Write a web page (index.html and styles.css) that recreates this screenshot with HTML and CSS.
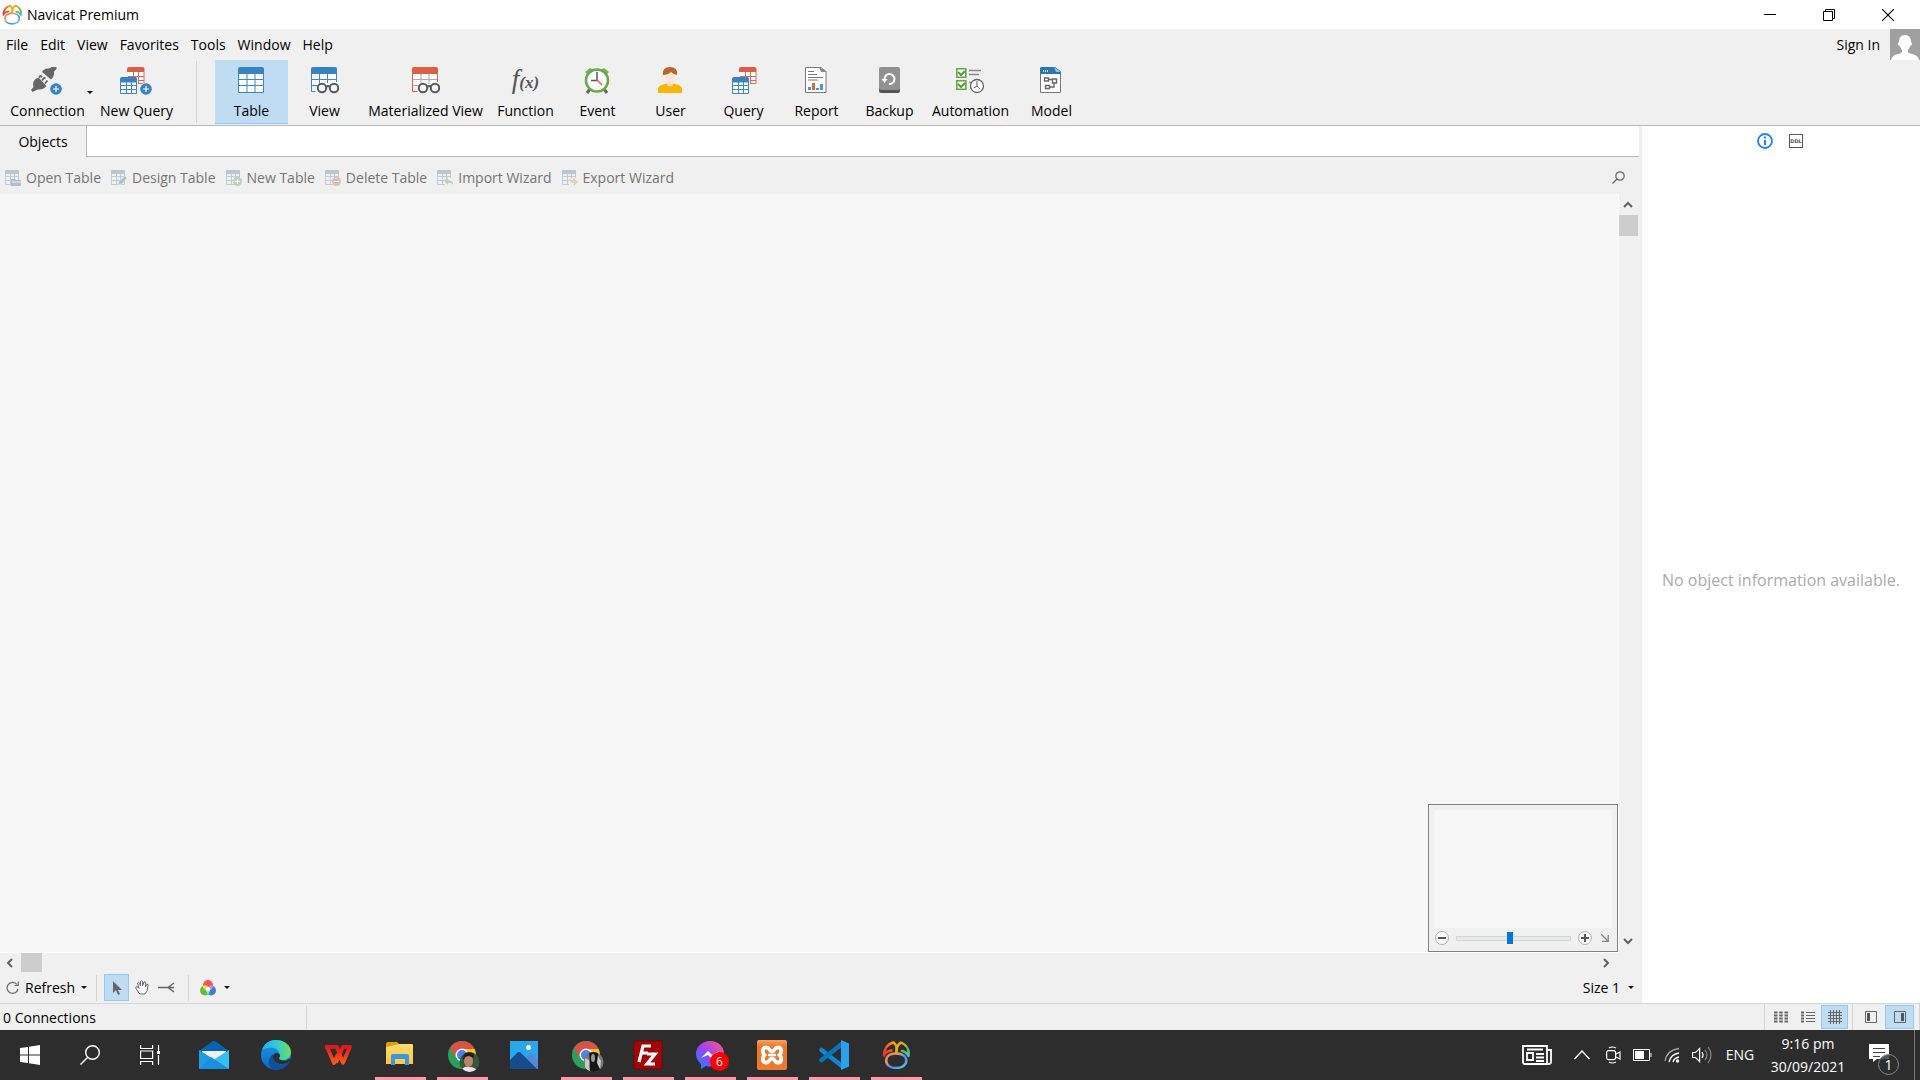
FILE: index.html
```html
<!DOCTYPE html>
<html lang="en">
<head>
<meta charset="utf-8">
<title>Navicat Premium</title>
<link rel="stylesheet" href="styles.css">
</head>
<body>
<svg class="defs" aria-hidden="true">
  <defs>
    <linearGradient id="g-warm" x1="0" y1="1" x2="1" y2="0"><stop offset="0" stop-color="#e8323c"/><stop offset=".35" stop-color="#ee4a2c"/><stop offset="1" stop-color="#ffb000"/></linearGradient>
    <linearGradient id="g-green" x1="0" y1="0" x2="1" y2="1"><stop offset="0" stop-color="#ffb000"/><stop offset=".35" stop-color="#d8b020"/><stop offset=".6" stop-color="#5fb85a"/><stop offset="1" stop-color="#46c8b4"/></linearGradient>
    <linearGradient id="g-body" x1="0" y1="0" x2="1" y2="1"><stop offset="0" stop-color="#ee6a2c"/><stop offset=".3" stop-color="#e9a070"/><stop offset=".6" stop-color="#4a86f0"/><stop offset="1" stop-color="#55d4dc"/></linearGradient>
    <linearGradient id="g-edge" x1="0" y1="0" x2="1" y2="0"><stop offset="0" stop-color="#2bb0ee"/><stop offset=".5" stop-color="#33c8d8"/><stop offset="1" stop-color="#6be05a"/></linearGradient>
    <linearGradient id="g-edge2" x1="0" y1="0" x2="0" y2="1"><stop offset="0" stop-color="#1b9de2"/><stop offset="1" stop-color="#0a66c4"/></linearGradient>
    <linearGradient id="g-wps" x1="0" y1="0" x2="0" y2="1"><stop offset="0" stop-color="#e0181c"/><stop offset="1" stop-color="#ff5a14"/></linearGradient>
    <linearGradient id="g-msg" x1="0" y1="1" x2="1" y2="0"><stop offset="0" stop-color="#0a8cff"/><stop offset=".5" stop-color="#a040f8"/><stop offset="1" stop-color="#ff6070"/></linearGradient>
    <linearGradient id="g-xampp" x1="0" y1="0" x2="0" y2="1"><stop offset="0" stop-color="#f7a468"/><stop offset=".2" stop-color="#ee7624"/><stop offset="1" stop-color="#ee7a30"/></linearGradient>
    <linearGradient id="g-folder" x1="0" y1="0" x2="0" y2="1"><stop offset="0" stop-color="#ffdc70"/><stop offset="1" stop-color="#fbc646"/></linearGradient>
    <linearGradient id="g-photo" x1="0" y1="0" x2="1" y2="1"><stop offset="0" stop-color="#28a8ea"/><stop offset="1" stop-color="#2ea6f0"/></linearGradient>

    <symbol id="navicat" viewBox="0 0 28 28">
      <g fill="none" stroke-width="2.400" stroke-linecap="round" stroke-linejoin="round">
        <path d="M2 14.500C1.500 9 5 3 11.500 1.500C14.500 4 15.500 7.500 14 11.500M2 14.500C2.800 11.500 6 10 9.500 9.500" stroke="url(#g-warm)"/>
        <path d="M14.500 11.500C14 7 16 3.500 19 1.500C24.500 4 27.500 9 26.500 15C25 12 23 10.500 20 10" stroke="url(#g-green)"/>
        <path d="M14.500 12.500C7.500 12 4.200 15.500 4.200 19.500C4.200 24.500 9 27 14 27C20 27 24.300 24 24.300 19.500C24.300 15.500 20.500 12.500 14.500 12.500" stroke="url(#g-body)"/>
      </g>
    </symbol>
    <symbol id="grid-blue" viewBox="0 0 26 26">
      <path d="M1 5h24v20H1z" fill="#fdfdfe"/><path d="M.5 6V25.500H25.500V6M9 6v19M17 6v19M1 12.500h24M1 18.500h24" fill="none" stroke="#3d87c3"/><path d="M0 7V2q0-2 2-2h22q2 0 2 2v5z" fill="#3782c2"/>
    </symbol>
    <symbol id="table" viewBox="0 0 30 28"><use href="#grid-blue" x="2" width="26" height="26"/></symbol>
    <symbol id="view" viewBox="0 0 30 28">
      <path d="M3 6h24v13H3z" fill="#fdfdfe"/><path d="M2.500 6V24.500h4M10.500 6v12M18.500 6v10M27.500 6v9M3 12.500h24M3 18.500h8" fill="none" stroke="#3d87c3"/><path d="M2 7V2q0-2 2-2h22q2 0 2 2v5z" fill="#3782c2"/>
      <g fill="#f7f7f7" stroke="#5a5a5a" stroke-width="2"><circle cx="13" cy="21" r="4.200"/><circle cx="25" cy="21" r="4.200"/><path d="M17 20q2-2 4 0" fill="none"/></g>
    </symbol>
    <symbol id="matview" viewBox="0 0 30 28">
      <path d="M3 6h24v12H3z" fill="#fafafa"/><path d="M11 6v12M19 6v11M3 12.500h24M3 18.500h7" fill="none" stroke="#aaa"/><path d="M2.500 6v18.500h5M27.500 6v9" fill="none" stroke="#d96044"/><path d="M2 7V2q0-2 2-2h22q2 0 2 2v5z" fill="#d96044"/>
      <g fill="#f7f7f7" stroke="#5a5a5a" stroke-width="2"><circle cx="13" cy="21" r="4.200"/><circle cx="25" cy="21" r="4.200"/><path d="M17 20q2-2 4 0" fill="none"/></g>
    </symbol>
    <symbol id="twogrid" viewBox="0 0 26 28">
      <path d="M8 5h16v12H8z" fill="#fff"/><path d="M24 5v11.500H8M13.500 5v6M18.500 5v12M8 9.500h16M17 13.500h7" fill="none" stroke="#e06a50"/><path d="M7 5V2q0-2 2-2h13.500q2 0 2 2v3z" fill="#d96044"/>
      <path d="M0 10h18v18H0z" fill="#f0f0f0"/><path d="M.5 15h16v11.500H.500zM6.500 15v12M11.500 15v12M1 18.500h16M1 22.500h16" fill="#fff" stroke="#3d87c3"/><path d="M0 15v-3q0-2 2-2h13q2 0 2 2v3z" fill="#3782c2"/>
    </symbol>
    <symbol id="plus" viewBox="0 0 12 12"><circle cx="6" cy="6" r="5.800" fill="#3a83c0"/><path d="M6 3v6M3 6h6" stroke="#fff" stroke-width="1.200"/></symbol>
    <symbol id="connection" viewBox="0 0 32 28">
      <path d="M0 23l2.500-3q-1.500-5 2-8l3-1.500L15.500 19q-3 4-9 3.500L1.500 25zM11 5q2-4 7-3.500l3-1.500h4.500v2L23 4.500q.5 5-3 8z" fill="#666"/><path d="M8 10.500l2-2M11 13.500l2.500-3M14 16.500l2.500-3M10 9l1 1M13 10.500l1.500 1" stroke="#666" stroke-width="1.800"/>
      <circle cx="24.500" cy="22" r="6.500" fill="#f0f0f0"/><use href="#plus" x="19" y="16" width="12" height="12"/>
    </symbol>
    <symbol id="newquery" viewBox="0 0 32 28"><use href="#twogrid" width="26" height="28"/><circle cx="26" cy="22" r="6.500" fill="#f0f0f0"/><use href="#plus" x="20" y="16" width="12" height="12"/></symbol>
    <symbol id="event" viewBox="0 0 30 28">
      <path d="M3 5l5-4 4 2-6 5zM27 5l-5-4-4 2 6 5z" fill="#77b455"/><path d="M8 22l-3 4M22 22l3 4" stroke="#666" stroke-width="3"/><circle cx="15" cy="13.500" r="11" fill="#fff" stroke="#67aa45" stroke-width="2.500"/><path d="M15 5v9M9 13.500h6" stroke="#555" stroke-width="1.500"/><path d="M15 13l5 5" stroke="#e25a48" stroke-width="1.400"/>
    </symbol>
    <symbol id="user" viewBox="0 0 30 28"><path d="M3 26v-5q1-3 7-4l5-1 5 1q6 1 7 4v5z" fill="#f8b800"/><path d="M12 14h6v4q-3 3-6 0z" fill="#fad9c4"/><path d="M9 5h12q0 12-6 12T9 6" fill="#fde5d5"/><path d="M8 8Q7 0 15 0t7 8q-4-1-6-3-3 3-8 3" fill="#b5682c"/></symbol>
    <symbol id="report" viewBox="0 0 30 28"><path d="M4.500.500H20l5 4V25.500H4.500z" fill="#fff" stroke="#777"/><path d="M18 0l8 5h-6z" fill="#888"/><path d="M7 4.500h6M7 7.500h9M7 10.500h15M7 13h10" stroke="#777"/><path d="M7 20h3v3H7zM15 21h3v2h-3zM19 17h3v6h-3z" fill="#4299e2"/><path d="M11 16h3v7h-3z" fill="#e76144"/></symbol>
    <symbol id="backup" viewBox="0 0 30 28"><rect x="5" y="3" width="21" height="23" rx="2" fill="#555"/><rect x="5" y="0" width="21" height="23" rx="2" fill="#919191"/><path d="M10.500 12.500A5 5 0 1 1 15 17" fill="none" stroke="#fff" stroke-width="2"/><path d="M7.500 12h6l-3 4z" fill="#fff"/></symbol>
    <symbol id="automation" viewBox="0 0 30 28"><path d="M1.800 1.800h9v8.500h-9zM1.800 13.800h9v8.500h-9z" fill="#fff" stroke="#67a546" stroke-width="1.600"/><path d="M3 5l3 3 4-4M3 17l3 3 4-4" fill="none" stroke="#579b36" stroke-width="2"/><path d="M14 3.500h12M14 7.500h10M14 15.500h4" stroke="#888" stroke-width="1.600"/><circle cx="22" cy="19" r="6.500" fill="#fff" stroke="#666" stroke-width="1.300"/><path d="M22 14v5l-3 2" fill="none" stroke="#555"/><path d="M22 19l3 3" stroke="#e25a48"/></symbol>
    <symbol id="model" viewBox="0 0 30 28"><path d="M4.500 1h15l5 4v20.500h-20z" fill="#fff" stroke="#777"/><path d="M4 7V2q0-2 2-2h13l6 4.500V7z" fill="#2d76b0"/><path d="M18 0l7 5h-5z" fill="#85c5f1"/><path d="M7 4h1M9 4h1M11 4h1" stroke="#fff" stroke-width="1.500"/><path d="M8.500 11h4v3h-4zM16.500 12h4v4h-4zM9.500 18.500h4v3h-4zM13 12.500h3M14 20h4v-4" fill="none" stroke="#666" stroke-width="1.400"/></symbol>
    <symbol id="mini" viewBox="0 0 16 16"><path d="M.5 3v11.500h13V3M5.500 3v11M9.500 3v11M1 6.500h13M1 10.500h13" fill="none" stroke="#bdccd6"/><path d="M0 4V1q0-1 1-1h12q1 0 1 1v3z" fill="#b7c8d3"/></symbol>
    <symbol id="caret" viewBox="0 0 6 4"><path d="M0 0h6L3 3z" fill="#111"/></symbol>
    <symbol id="chrome" viewBox="0 0 32 32"><circle cx="14" cy="14" r="14" fill="#2ba158"/><path d="M2 7A14 14 0 0 1 26.500 8H14L8 17z" fill="#da5145"/><path d="M14 8h12.500A14 14 0 0 1 16 28l5-10z" fill="#fbc22d"/><circle cx="14" cy="14" r="6.500" fill="#f4f6f8"/><circle cx="14" cy="14" r="5" fill="#4a84e8"/></symbol>
  </defs>
</svg>

<header class="titlebar">
  <svg class="logo" width="20" height="21"><use href="#navicat"/></svg>
  <span class="title">Navicat Premium</span>
  <button class="winbtn" aria-label="Minimize"><svg width="12" height="12"><path d="M0 5.500h12" stroke="#000"/></svg></button>
  <button class="winbtn" aria-label="Restore"><svg width="12" height="12" fill="none" stroke="#000"><path d="M.5 2.500h9v9h-9zM2.500 2V.500h9v9H10"/></svg></button>
  <button class="winbtn" aria-label="Close"><svg width="12" height="12"><path d="M0 0l12 12M12 0L0 12" stroke="#000" stroke-width="1.200"/></svg></button>
</header>

<nav class="menubar">
  <button>File</button><button>Edit</button><button>View</button><button>Favorites</button><button>Tools</button><button>Window</button><button>Help</button>
  <a class="signin" href="#">Sign In</a>
  <svg class="avatar" width="30" height="31" viewBox="0 0 30 31"><path d="M0 0h30v31H0z" fill="#a0a0a0"/><path d="M1 31q1-5 7-6 5-1 4-4-2-2-2-4-2 0-2-3l1-1q0-7 6-7t6 7l1 1q0 3-2 3 0 2-2 4-1 3 4 4 6 1 7 6z" fill="#fff"/></svg>
</nav>

<div class="toolbar">
  <button class="tool conn"><svg width="32" height="28"><use href="#connection"/></svg>Connection</button>
  <button class="drop" aria-label="Connection types"><svg width="6" height="4"><use href="#caret"/></svg></button>
  <button class="tool newq"><svg width="32" height="28"><use href="#newquery"/></svg>New Query</button>
  <i class="divider"></i>
  <button class="tool active"><svg width="30" height="28"><use href="#table"/></svg>Table</button>
  <button class="tool"><svg width="30" height="28"><use href="#view"/></svg>View</button>
  <button class="tool wide"><svg width="30" height="28"><use href="#matview"/></svg>Materialized View</button>
  <button class="tool narrow"><span class="fx" aria-hidden="true">f<small>(x)</small></span>Function</button>
  <button class="tool"><svg width="30" height="28"><use href="#event"/></svg>Event</button>
  <button class="tool"><svg width="30" height="28"><use href="#user"/></svg>User</button>
  <button class="tool"><svg width="30" height="28"><use href="#twogrid" x="4" width="26" height="28"/></svg>Query</button>
  <button class="tool"><svg width="30" height="28"><use href="#report"/></svg>Report</button>
  <button class="tool"><svg width="30" height="28"><use href="#backup"/></svg>Backup</button>
  <button class="tool medium"><svg width="30" height="28"><use href="#automation"/></svg>Automation</button>
  <button class="tool"><svg width="30" height="28"><use href="#model"/></svg>Model</button>
</div>

<main class="workspace">
  <section class="objects">
    <div class="tabs"><button class="tab">Objects</button><div class="tabfill"></div></div>
    <div class="actions">
      <button disabled><svg width="16" height="16"><use href="#mini"/><path d="M6 9h4l1 1h5v6H6z" fill="#b0bfcb"/><path d="M7 12h9" stroke="#f0f0f0"/></svg>Open Table</button>
      <button disabled><svg width="16" height="16"><use href="#mini"/><path d="M7 15l1-4 6-5 2 2-5 6z" fill="#b0bfcb" stroke="#f0f0f0" stroke-width=".5"/></svg>Design Table</button>
      <button disabled><svg width="16" height="16"><use href="#mini"/><circle cx="11.500" cy="11.500" r="4.500" fill="#bdd2b2"/><path d="M11.500 9v5M9 11.500h5" stroke="#fff"/></svg>New Table</button>
      <button disabled><svg width="16" height="16"><use href="#mini"/><circle cx="11.500" cy="11.500" r="4.500" fill="#e2bab6"/><path d="M9 11.500h5" stroke="#fff"/></svg>Delete Table</button>
      <button disabled><svg width="16" height="16"><use href="#mini"/><path d="M8 8h8v8H8z" fill="#f0f0f0"/><path d="M7 11l4-4v3q5 0 5 5-2-3-5-2v2z" fill="#bfd4b4"/></svg>Import Wizard</button>
      <button disabled><svg width="16" height="16"><use href="#mini"/><path d="M7 8h9v8H7z" fill="#f0f0f0"/><path d="M7 7q0 3 4 3V8l5 4-4 4v-3q-5 0-5-6" fill="#ead0b1"/></svg>Export Wizard</button>
      <button class="find" aria-label="Search"><svg width="13" height="13" fill="none" stroke="#666" stroke-width="1.200"><circle cx="8" cy="5" r="4.200"/><path d="M5 8L.5 12.500"/></svg></button>
    </div>
    <div class="canvasrow">
      <div class="canvas">
        <div class="navigator">
          <div class="preview"></div>
          <div class="zoom">
            <button aria-label="Zoom out"><svg width="14" height="14"><circle cx="7" cy="7" r="6.500" fill="#fafafa" stroke="#b0b0b0"/><path d="M3 7h8" stroke="#555" stroke-width="2"/></svg></button>
            <input type="range" min="0" max="100" value="47" aria-label="Zoom">
            <button aria-label="Zoom in"><svg width="14" height="14"><circle cx="7" cy="7" r="6.500" fill="#fafafa" stroke="#b0b0b0"/><path d="M3 7h8M7 3v8" stroke="#555" stroke-width="2"/></svg></button>
            <button class="shrink" aria-label="Hide overview"><svg width="8" height="8" fill="none" stroke="#888" stroke-width="1.300"><path d="M0 0l7 7M7.300 1v6.300H1"/></svg></button>
          </div>
        </div>
      </div>
      <div class="vscroll">
        <button aria-label="Scroll up"><svg width="10" height="8"><path d="M1 6l4-4 4 4" fill="none" stroke="#606060" stroke-width="2"/></svg></button>
        <i class="thumb"></i>
        <button class="end" aria-label="Scroll down"><svg width="10" height="8"><path d="M1 2l4 4 4-4" fill="none" stroke="#606060" stroke-width="2"/></svg></button>
      </div>
    </div>
    <div class="hscroll">
      <button aria-label="Scroll left"><svg width="8" height="10"><path d="M6 1L2 5l4 4" fill="none" stroke="#606060" stroke-width="2"/></svg></button>
      <i class="thumb"></i>
      <button class="end" aria-label="Scroll right"><svg width="8" height="10"><path d="M2 1l4 4-4 4" fill="none" stroke="#606060" stroke-width="2"/></svg></button>
    </div>
    <div class="viewbar">
      <button class="refresh"><svg width="13" height="13" fill="none" stroke="#666" stroke-width="1.200"><path d="M11 3.500A5.500 5.500 0 1 0 12 8M12.300.500v4H8.500"/></svg>Refresh<svg width="6" height="4"><use href="#caret"/></svg></button>
      <i class="divider"></i>
      <button class="square on" aria-label="Select"><svg width="10" height="14"><path d="M1 0v12l3-3 2 5 2-1-2-4h4z" fill="#666"/></svg></button>
      <button class="square" aria-label="Move"><svg width="14" height="15" fill="#fff" stroke="#666"><path d="M4 13L.7 8q0-2 2-1L4 8.500 2.500 3q1-1.500 2 0l1 3V1.500q1-1.500 2 0V6L9 2q1.500-1 1.800.500L10.500 7l1.200-2.500q1.500-.700 1.500.500L12 11l-2 3H5z"/></svg></button>
      <button class="square" aria-label="Relation"><svg width="17" height="11" fill="none" stroke="#666" stroke-width="1.400"><path d="M0 5.500h16M16 1l-6 4.500 6 4.500"/></svg></button>
      <i class="divider"></i>
      <button class="color" aria-label="Color"><svg width="16" height="16"><circle cx="8" cy="5" r="5" fill="#f4564c"/><circle cx="5" cy="10.500" r="5" fill="#67bf36"/><circle cx="11" cy="10.500" r="5" fill="#3c83c0"/><path d="M3 6q3-2 5 1l-2 3q-3-1-3-4" fill="#fbd94a"/><path d="M13 6q-3-2-5 1l2 3q3-1 3-4" fill="#e17bea"/><circle cx="8" cy="9" r="2.300" fill="#fff"/><path d="M6 11h4l-2 4z" fill="#8fe3dc"/></svg><svg width="6" height="4"><use href="#caret"/></svg></button>
      <button class="size">Size 1<svg width="6" height="4"><use href="#caret"/></svg></button>
    </div>
  </section>

  <aside class="info">
    <div class="infotabs">
      <button aria-label="General"><svg width="16" height="16"><circle cx="8" cy="8" r="7" fill="none" stroke="#1e82f5" stroke-width="1.800"/><path d="M8 3.500v2M8 7v5" stroke="#1e82f5" stroke-width="2"/></svg></button>
      <button aria-label="DDL"><span class="ddl">DDL</span></button>
    </div>
    <p>No object information available.</p>
  </aside>
</main>

<footer class="status">
  <span class="connections">0 Connections</span>
  <div class="modes">
    <button aria-label="Grid"><svg width="14" height="12"><path d="M0 1.500h14M0 4.500h14M0 7.500h14M0 10.500h14" stroke="#666" stroke-width="2" stroke-dasharray="3.500 1.750"/></svg></button>
    <button aria-label="List"><svg width="14" height="12"><path d="M0 1.500h3M0 4.500h3M0 7.500h3M0 10.500h3" stroke="#666" stroke-width="2"/><path d="M5 1.500h9M5 4.500h9M5 7.500h9M5 10.500h9" stroke="#666"/></svg></button>
    <button class="on" aria-label="Diagram"><svg width="14" height="14"><path d="M2.500 0v14M5.500 0v14M8.500 0v14M11.500 0v14M0 2.500h14M0 5.500h14M0 8.500h14M0 11.500h14" stroke="#666"/></svg></button>
  </div>
  <div class="panes">
    <button aria-label="Left pane"><svg width="12" height="12"><path d="M.5.500h11v11H.500z" fill="none" stroke="#666"/><path d="M2 2h3v8H2z" fill="#555"/></svg></button>
    <button class="on" aria-label="Right pane"><svg width="12" height="12"><path d="M.5.500h11v11H.500z" fill="none" stroke="#666"/><path d="M7 2h3v8H7z" fill="#555"/></svg></button>
  </div>
</footer>

<div class="taskbar">
  <button class="sys" aria-label="Start"><svg width="20" height="20" fill="#fff"><path d="M0 3l8-1v7.500H0zM9 1.800L20 0v9.500H9zM0 10.500h8V18l-8-1zM9 10.500h11V20L9 18.200z"/></svg></button>
  <button class="sys" aria-label="Search"><svg width="20" height="20" fill="none" stroke="#fff" stroke-width="1.400"><circle cx="12.500" cy="7.500" r="6.800"/><path d="M7.500 12.500L.5 19.500"/></svg></button>
  <button class="sys" aria-label="Task view"><svg width="20" height="20" fill="none" stroke="#fff" stroke-width="1.200"><path d="M.6 0v3.500h12V0M.6 20v-3.500h12V20M.6 6h12v7.500H.600zM18.500 0v6M18.500 10v10"/><path d="M17 6h3v3h-3z" fill="#fff" stroke="none"/></svg></button>
  <button class="app" aria-label="Mail"><svg width="30" height="30" viewBox="0 0 30 30"><path d="M0 11L14 1h2l14 10v5H0z" fill="#0764b5"/><path d="M3 11h24v12H3z" fill="#f1f1f1"/><path d="M0 10l16 10L0 29z" fill="#1d9ce4"/><path d="M30 10L0 29h30z" fill="#36bdf2"/><path d="M0 29l12-12 18 12z" fill="#198fe0"/></svg></button>
  <button class="app" aria-label="Edge"><svg width="30" height="30" viewBox="0 0 30 30"><circle cx="15" cy="15" r="15" fill="url(#g-edge2)"/><path d="M1 10C4 2 10 0 15 0c9 0 15 6 15 12 0 5-4 8-8 8-3 0-5-1-4-3 3-6-5-11-11-9-3 0-5 1-6 2" fill="url(#g-edge)"/><path d="M12 17c0 7 8 10 16 5-4 7-11 9-17 7-5-5-4-11 1-15z" fill="#114f9d"/><path d="M12 17c0-4 4-5 6-3 2 1 1 3 0 4 0 3 7 4 10 1l2 0-2 3c-7 4-16 2-16-5" fill="#2d2d2d"/></svg></button>
  <button class="app" aria-label="WPS Office"><svg width="30" height="30" viewBox="0 0 30 30"><g fill="none" stroke="url(#g-wps)" stroke-width="3.800" stroke-linejoin="round"><path d="M2 6.800h12l6 16 7-16h-7l-7 16M4 7l7 16 4-9"/></g></svg></button>
  <button class="app open" aria-label="File Explorer"><svg width="28" height="26" viewBox="0 0 28 26"><path d="M0 2q0-2 2-2h9l2 2v4H0z" fill="#dfa000"/><path d="M0 5l13-3h13q1 0 1 1v19H0z" fill="url(#g-folder)"/><path d="M5 23V14q0-2 2-2h14q2 0 2 2v9h-4v-6H9v6z" fill="#3e96da"/></svg></button>
  <button class="app open profile" aria-label="Chrome"><svg width="32" height="32" viewBox="0 0 32 32"><use href="#chrome"/><clipPath id="c1"><circle cx="21.500" cy="21" r="10"/></clipPath><g clip-path="url(#c1)"><path d="M11 11h21v20H11z" fill="#34593a"/><path d="M13 31q1-6 8-5 7 0 9 5z" fill="#ece5ea"/><ellipse cx="20.500" cy="20" rx="4.500" ry="6" fill="#bd8268"/><path d="M15 18q0-7 6-7t5 6l-5-2-4 1-1 3z" fill="#241d1b"/></g></svg></button>
  <button class="app" aria-label="Photos"><svg width="28" height="28" viewBox="0 0 28 28"><path d="M0 0h28v28H0z" fill="url(#g-photo)"/><circle cx="18.500" cy="6.500" r="2.500" fill="#fff"/><path d="M12 20l9-8 7 7v9H12z" fill="#5986d8"/><path d="M0 19L8 11l2 0 17 17H0z" fill="#164b8e"/></svg></button>
  <button class="app open profile" aria-label="Chrome profile"><svg width="32" height="32" viewBox="0 0 32 32"><use href="#chrome"/><clipPath id="c2"><circle cx="21.500" cy="21" r="10"/></clipPath><g clip-path="url(#c2)"><path d="M11 11h21v20H11z" fill="#777"/><path d="M17 11h8l3 7v13H16l2-9z" fill="#161616"/><path d="M13 17l4 2 1 12h-5zM26 14l3 6-1 8-3-6z" fill="#c8c8c8"/><ellipse cx="21" cy="17" rx="2" ry="4" fill="#999"/></g></svg></button>
  <button class="app open" aria-label="FileZilla"><svg width="30" height="30" viewBox="0 0 30 30"><path d="M1 1h28v28H1z" fill="#a50505" stroke="#760000" stroke-dasharray="2 1"/><path d="M6 22L10 6h8M8 13h7M14 14h8l-8 10h8" fill="none" stroke="#fff" stroke-width="3.200"/></svg></button>
  <button class="app open" aria-label="Messenger"><svg width="30" height="30" viewBox="0 0 30 30"><path d="M15 1C7 1 1 7 1 14c0 4 2 7 5 10v5l5-3q2 .5 4 .5c8 0 14-6 14-13S23 1 15 1" fill="url(#g-msg)"/><path d="M6 18l7-7 4 4 7-4-7 8-4-4z" fill="#fff"/></svg><span class="badge">6</span></button>
  <button class="app open" aria-label="XAMPP"><svg width="30" height="30" viewBox="0 0 30 30"><rect width="30" height="30" rx="2" fill="url(#g-xampp)"/><path d="M9.500 7.500C5 7 5 12.500 7.500 15C5 17.500 5 23 9.500 22.500C13 22.500 12 18.500 15 18.500S17 22.500 20.500 22.500C25 23 25 17.500 22.500 15C25 12.500 25 7 20.500 7.500C17 7.500 18 11.500 15 11.500S13 7.500 9.500 7.500z" fill="none" stroke="#fff" stroke-width="3.800"/><path d="M11 15h8" stroke="#fff" stroke-width="2.500"/></svg></button>
  <button class="app open" aria-label="Visual Studio Code"><svg width="30" height="30" viewBox="0 0 30 30"><path d="M2.500 10L23 26" stroke="#0f86d2" stroke-width="4.500" stroke-linecap="round"/><path d="M2.500 20L23 4" stroke="#0874bd" stroke-width="4.500" stroke-linecap="round"/><path d="M22 0l8 3.500v23L22 30V8z" fill="#2ba0ed"/></svg></button>
  <button class="app open" aria-label="Navicat"><svg width="28" height="28"><use href="#navicat"/></svg></button>

  <div class="tray">
    <button class="news" aria-label="News"><svg width="30" height="21" fill="none" stroke="#fff" stroke-width="2"><path d="M1 1h24v18H3q-2 0-2-2zM25 5h4v12q0 2-3 2M5 8h6v7H5zM5 4.500h16M14 9h8M14 12.500h8M14 16h8" stroke-width="1.800"/></svg></button>
    <button class="up" aria-label="Hidden icons"><svg width="16" height="10"><path d="M.5 9L8 1l7.500 8" fill="none" stroke="#fff" stroke-width="1.300"/></svg></button>
    <button aria-label="Meet Now"><svg width="15" height="18" fill="none" stroke="#fff" stroke-width="1.200"><rect x=".6" y="4.600" width="9" height="9" rx="2"/><path d="M10 8l4-2v7l-4-2M3 2q3-2 7 0M3 16q3 2 7 0"/></svg></button>
    <button aria-label="Battery"><svg width="19" height="12"><path d="M.5.500h16v11H.500zM18 4v4" fill="none" stroke="#fff"/><path d="M2 2h9v8H2z" fill="#fff"/></svg></button>
    <button aria-label="Wi-Fi"><svg width="16" height="16" fill="none" stroke="#fff" stroke-width="1.300"><path d="M9 15q1-4 6-5M5 15q2-8 10-9" /><path d="M1 14Q3 3 15 1.500" stroke="#aaa"/><circle cx="13.500" cy="14" r="1" fill="#fff"/></svg></button>
    <button aria-label="Volume"><svg width="21" height="18" fill="none" stroke="#fff" stroke-width="1.200"><path d="M.6 6.500h3l4-4v13l-4-4h-3zM10 6q2 3 0 6"/><path d="M13 4q4 5 0 10M16 1q6 8 0 16" stroke="#888"/></svg></button>
    <button class="lang">ENG</button>
    <button class="clock"><time>9:16 pm</time><time>30/09/2021</time></button>
    <button class="notice" aria-label="Notifications"><svg width="20" height="18"><path d="M0 0h20v15H8l-4 3v-3H0z" fill="#fff"/><path d="M4 4.500h12M4 8.500h12M4 12.500h7" stroke="#444"/></svg><span class="count">1</span></button>
    <i class="desktop"></i>
  </div>
</div>
</body>
</html>
```
FILE: styles.css
```css
* { box-sizing: border-box; }

body {
  margin: 0;
  height: 100vh;
  display: flex;
  flex-direction: column;
  overflow: hidden;
  background: #f0f0f0;
  color: #000;
  font: 14px/20px "Open Sans", "Noto Sans", sans-serif;
}

.defs { position: absolute; width: 0; height: 0; }

button {
  display: flex;
  align-items: center;
  justify-content: center;
  margin: 0;
  padding: 0;
  border: 0;
  background: none;
  color: inherit;
  font: inherit;
  white-space: nowrap;
}

svg { display: block; flex: none; }

.titlebar { display: flex; height: 29px; background: #fff; align-items: center; padding: 0 3px 0 2px; }
.logo { margin-right: 5px; }
.title { flex: 1; }
.winbtn { width: 59px; height: 29px; }

.menubar { display: flex; height: 31px; align-items: center; padding-left: 6px; gap: 12px; }
.signin { margin-left: auto; margin-right: -2px; color: inherit; text-decoration: none; }

.toolbar { display: flex; height: 66px; border-bottom: 1px solid #b8b8b8; padding-left: 10px; }
.tool { width: 73px; height: 64px; flex-direction: column; justify-content: flex-start; padding-top: 7px; gap: 6px; }
.tool svg { margin-right: 1px; }
.tool.conn { width: 75px; }
.tool.newq { width: 85px; }
.tool.wide { width: 129px; }
.tool.narrow { width: 71px; }
.tool.medium { width: 89px; }
.tool.active { background: #c0dcf3; border-bottom: 1px solid #91c9f7; }
.drop { width: 9px; }
.divider { width: 1px; background: #d5d5d5; }
.toolbar .divider { margin: 1px 18px 2px 17px; }
.fx { height: 28px; font: italic 27px/24px "Liberation Serif", serif; color: #555; }
.fx small { font-size: 17px; font-weight: bold; }

.workspace { flex: 1; display: flex; min-height: 0; }
.objects { flex: 1; display: flex; flex-direction: column; min-width: 0; padding-right: 3px; }

.tabs { display: flex; height: 31px; }
.tab { width: 86px; }
.tabfill { flex: 1; background: #fff; border: solid #b8b8b8; border-width: 0 0 1px 1px; }

.actions { display: flex; height: 37px; align-items: center; padding: 4px 14px 0 5px; gap: 10px; }
.actions button { gap: 5px; color: #757575; }
.actions .find { margin-left: auto; }

.canvasrow { flex: 1; display: flex; min-height: 0; }
.canvas { flex: 1; position: relative; background: #f7f7f7; border: solid #fff; border-width: 0 1px 1px 0; }
.navigator {
  position: absolute;
  right: 0;
  bottom: 0;
  width: 190px;
  height: 148px;
  padding: 5px;
  background: #f0f0f0;
  border: 1px solid #808080;
}
.preview { height: 118px; background: #f7f7f7; }
.zoom { display: flex; align-items: center; height: 20px; padding: 0 3px 0 1px; gap: 7px; }
.zoom input { appearance: none; flex: 1; min-width: 0; height: 12px; margin: 0; background: none; }
.zoom input::-webkit-slider-runnable-track { height: 5px; background: #e7eaea; border: 1px solid #d6d6d6; }
.zoom input::-webkit-slider-thumb { appearance: none; width: 6px; height: 12px; margin-top: -5px; background: #0078d7; }
.shrink { margin-left: 2px; }

.vscroll { width: 20px; display: flex; flex-direction: column; }
.vscroll button { height: 21px; padding-right: 2px; }
.hscroll { height: 20px; display: flex; padding: 0 22px 1px 0; }
.hscroll button { width: 21px; padding-right: 2px; }
.thumb { background: #cdcdcd; width: 19px; height: 21px; }
.hscroll .thumb { width: 21px; height: 19px; }
.vscroll .end { margin-top: auto; height: 25px; }
.hscroll .end { margin-left: auto; }

.viewbar { display: flex; height: 30px; padding: 1px 5px 2px 6px; }
.refresh { gap: 6px; }
.viewbar .divider { margin: 1px 7px 0 9px; }
.square { width: 25px; }
.square.on { background: #c0dcf3; border: 1px solid #91c9f7; }
.color { gap: 8px; margin-left: 4px; }
.size { gap: 8px; margin-left: auto; }

.info { width: 278px; background: #fff; display: flex; flex-direction: column; }
.infotabs { display: flex; justify-content: center; gap: 16px; height: 31px; padding: 0 2px 1px 0; }
.ddl { width: 14px; height: 14px; border: 1px solid #555; color: #555; font: bold 5px/12px "DejaVu Sans", sans-serif; }
.info p { margin: auto; color: #aaa; font-size: 16px; }

.status { display: flex; height: 27px; border-top: 1px solid #d5d5d5; }
.connections { width: 307px; padding: 3px 3px 0; border-right: 1px solid #d5d5d5; margin: 2px 0 1px; line-height: 18px; }
.modes { display: flex; margin-left: auto; border-left: 1px solid #d5d5d5; padding: 1px 4px 1px 2px; }
.panes { display: flex; border: solid #d5d5d5; border-width: 0 1px; padding: 1px 5px 1px 3px; }
.status button { width: 27px; }
.panes button { width: 29px; }
.status .on { background: #c0dcf3; border: 1px solid #91c9f7; }

.taskbar { display: flex; height: 50px; background: #2d2d2d; color: #fff; }
.sys { width: 60px; }
.app { width: 62px; position: relative; }
.sys + .app { margin-left: 3px; }
.open { background: linear-gradient(#ff98a2, #ff98a2) center bottom / 51px 3px no-repeat; }
.profile { padding: 3px 0 0 3px; }
.badge {
  position: absolute;
  right: 12px;
  top: 22px;
  width: 19px;
  height: 19px;
  border-radius: 50%;
  background: #f00;
  font: 12px/19px "Open Sans", sans-serif;
}

.tray { display: flex; margin-left: auto; gap: 12px; }
.news { margin-right: 10px; }
.up { margin-right: 4px; }
.lang { width: 30px; }
.clock { width: 76px; flex-direction: column; line-height: 23px; margin-left: 3px; }
.notice { width: 32px; position: relative; margin: 0 2px 0 10px; }
.notice svg { margin: 0 10px 4px 0; }
.count {
  position: absolute;
  right: 1px;
  bottom: 5px;
  width: 21px;
  height: 21px;
  border: 1px solid #888;
  border-radius: 50%;
  background: rgba(45, 45, 45, .8);
  font: 14px/19px "Open Sans", sans-serif;
}
.desktop { width: 6px; border-left: 1px solid #777; }
```
